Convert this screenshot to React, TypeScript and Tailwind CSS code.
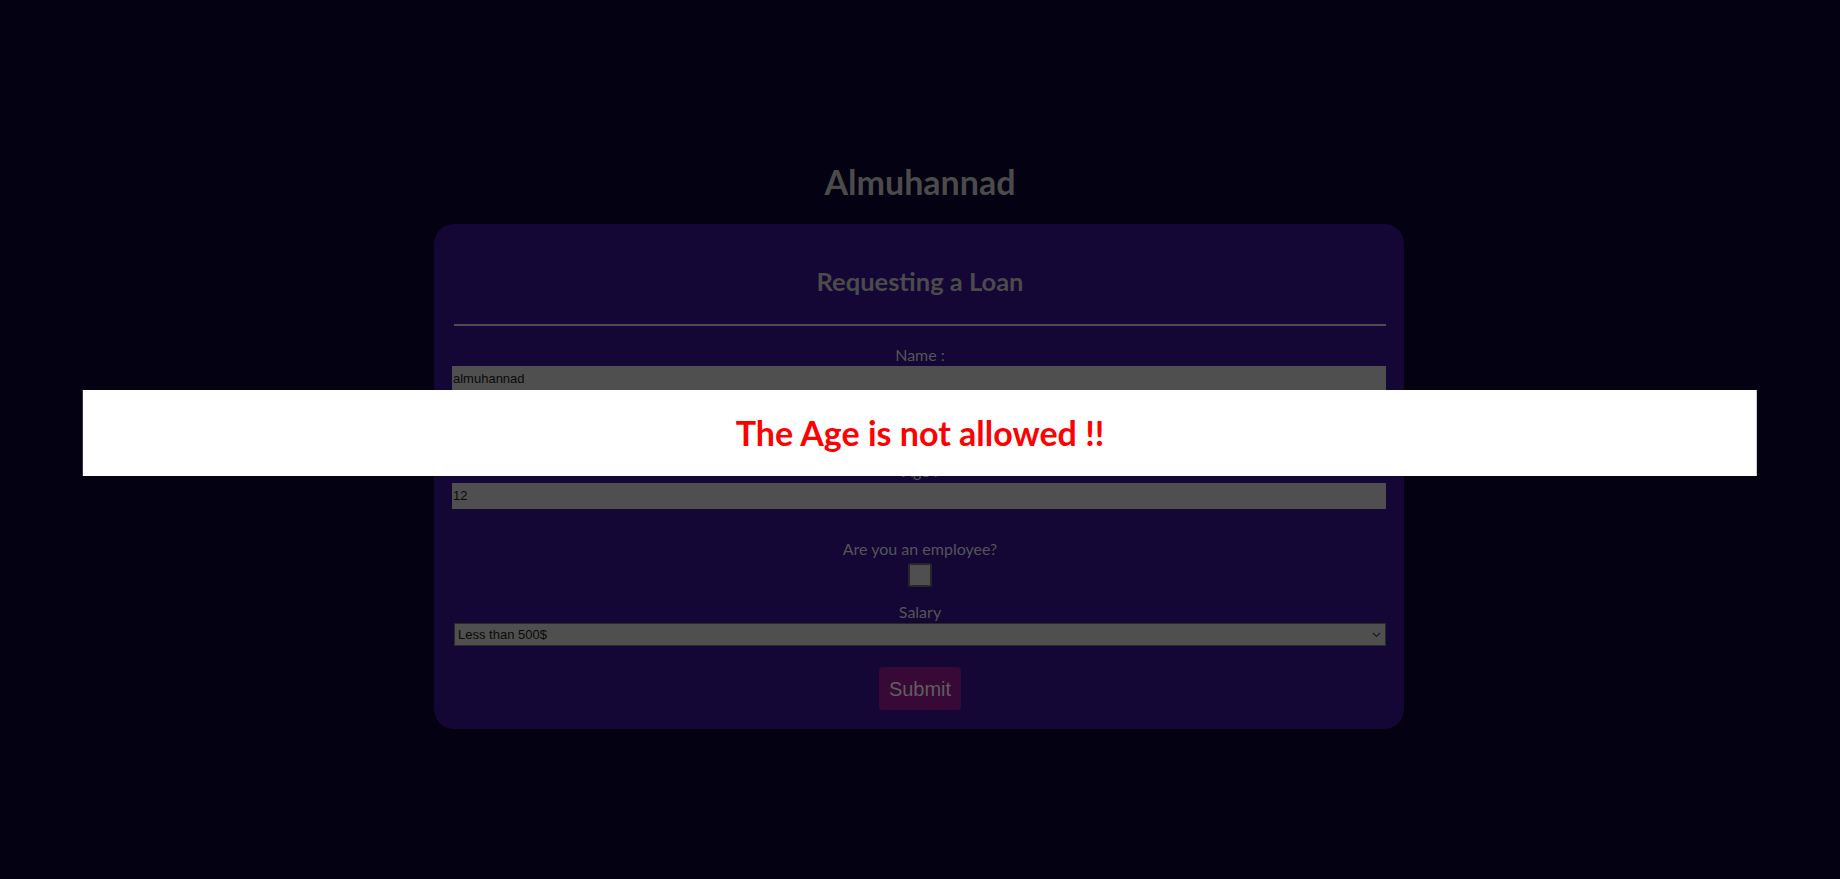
import React from "react";

export default function App() {
  const font = "font-['Segoe_UI','Lato','Open_Sans',sans-serif]";
  return (
    <div className={`relative min-h-[879px] w-full bg-[#030112] ${font}`}>
      <div className="flex flex-col items-center pt-[162px]">
        <h1 className="text-[34px] font-bold leading-[40px] text-[#4b4b4b]">Almuhannad</h1>
        <div className="ml-[-2px] mt-[22px] flex w-[970px] flex-col items-center rounded-[20px] bg-[#140736] pb-[19px] pl-[20px] pr-[18px] pt-[42px]">
          <h2 className="text-[25.5px] font-bold leading-[30px] text-[#4b4b4b]">Requesting a Loan</h2>
          <div className="mt-[28px] h-[2px] w-full bg-[#4e4e4e]" />
          <label className="mt-[18px] text-[16px] leading-[22px] text-[#555]">Name :</label>
          <div className="ml-[-2px] flex h-[26px] w-[calc(100%+2px)] items-center bg-[#4f4f4f] pl-[1px] font-['Liberation_Sans',Arial,sans-serif] text-[13px] text-[#0a0a0a]">
            almuhannad
          </div>
          <label className="mt-[68px] text-[16px] leading-[22px] text-[#555]">Age :</label>
          <div className="ml-[-2px] mt-[1px] flex h-[26px] w-[calc(100%+2px)] items-center bg-[#4f4f4f] pl-[1px] font-['Liberation_Sans',Arial,sans-serif] text-[13px] text-[#0a0a0a]">
            12
          </div>
          <label className="mt-[29px] text-[16px] leading-[22px] text-[#555]">Are you an employee?</label>
          <div className="mt-[3px] h-[24px] w-[24px] rounded-[2px] border-[2px] border-[#262626] bg-[#4f4f4f]" />
          <label className="mt-[14px] text-[16px] leading-[22px] text-[#555]">Salary</label>
          <div className="flex h-[23px] w-full items-center justify-between border border-[#2a2a2a] bg-[#4f4f4f] pl-[3px] pr-[4px] font-['Liberation_Sans',Arial,sans-serif] text-[13px] text-[#0a0a0a]">
            <span>Less than 500$</span>
            <svg width="9" height="6" viewBox="0 0 9 6" fill="none">
              <path d="M1 1l3.5 3.5L8 1" stroke="#1c1c1c" strokeWidth="1.2" />
            </svg>
          </div>
          <button className="mt-[21px] h-[43px] w-[82px] rounded-[4px] bg-[#380937] font-['Liberation_Sans',Arial,sans-serif] text-[20px] text-[#5e5e5e]">
            Submit
          </button>
        </div>
      </div>
      <div className="absolute left-1/2 top-[390px] flex h-[86px] w-[91%] -translate-x-1/2 items-center justify-center bg-white">
        <span className="text-[34px] font-bold leading-[40px] text-[#ff0000]">The Age is not allowed !!</span>
      </div>
    </div>
  );
}
